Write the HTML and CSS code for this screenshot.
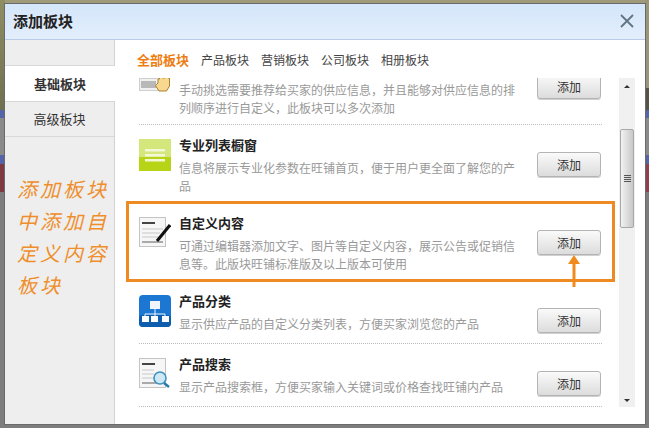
FILE: index.html
```html
<!DOCTYPE html>
<html lang="zh-CN">
<head>
  <meta charset="UTF-8">
  <title>添加板块</title>
  <link rel="stylesheet" href="styles.css">
</head>
<body>
  <div class="dialog">
    <header class="dialog-head">
      <h1>添加板块</h1>
      <svg class="close" width="14" height="14" viewBox="0 0 14 14"><path d="M1 1 13 13M13 1 1 13" stroke="#5f7484" stroke-width="1.8" fill="none"/></svg>
    </header>
    <div class="dialog-body">
      <aside class="side">
        <div class="side-tab active">基础板块</div>
        <div class="side-tab">高级板块</div>
        <p class="hand">添加板块<br>中添加自<br>定义内容<br>板块</p>
      </aside>
      <main class="main">
        <nav class="tabs">
          <span class="tab active">全部板块</span>
          <span class="tab">产品板块</span>
          <span class="tab">营销板块</span>
          <span class="tab">公司板块</span>
          <span class="tab">相册板块</span>
        </nav>
        <div class="panel">
          <div class="list">
            <div class="row tall first">
              <svg class="icon" width="32" height="32" viewBox="0 0 32 32">
                <rect x="0.500" y="17.500" width="20" height="12" fill="#f0f0f0" stroke="#cfcfcf"/>
                <rect x="2" y="20" width="15" height="7" fill="#b8b8b8"/>
                <path d="M16.500 24.500 19 22V18h1.500V16h3v1h2.500V16h3v1h1.500v8l-3 5H20z" fill="#f7d88e" stroke="#a9812f"/>
              </svg>
              <div class="info">
                <p>手动挑选需要推荐给买家的供应信息，并且能够对供应信息的排列顺序进行自定义，此板块可以多次添加</p>
              </div>
              <button class="add">添加</button>
            </div>
            <div class="row tall">
              <svg class="icon" width="32" height="32" viewBox="0 0 32 32">
                <rect width="32" height="32" fill="#d3e77c"/>
                <rect y="18" width="32" height="14" fill="#b7d417"/>
                <path d="M6 10h20v2.500H6zM6 15h20v2.500H6zM6 20h20v2.500H6z" fill="#f4f8d8"/>
              </svg>
              <div class="info">
                <h3>专业列表橱窗</h3>
                <p>信息将展示专业化参数在旺铺首页，便于用户更全面了解您的产品</p>
              </div>
              <button class="add">添加</button>
            </div>
            <div class="row tall">
              <svg class="icon" width="32" height="32" viewBox="0 0 32 32">
                <rect x="0.500" y="0.500" width="26" height="29" fill="#f6f6f6" stroke="#c4c4c4"/>
                <path d="M3 6h13" stroke="#444" stroke-width="2"/>
                <path d="M3 12h21M3 16h18M3 20h16" stroke="#c8c8c8"/>
                <path d="M3 25h21" stroke="#aaa" stroke-width="2"/>
                <path d="M18 24 31 8" stroke="#111" stroke-width="3"/>
              </svg>
              <div class="info">
                <h3>自定义内容</h3>
                <p>可通过编辑器添加文字、图片等自定义内容，展示公告或促销信息等。此版块旺铺标准版及以上版本可使用</p>
              </div>
              <button class="add">添加</button>
            </div>
            <div class="row">
              <svg class="icon" width="32" height="32" viewBox="0 0 32 32">
                <rect width="32" height="32" rx="4" fill="#1b77d2"/>
                <rect y="20" width="32" height="12" rx="4" fill="#0d5cae"/>
                <rect x="11" y="6" width="10" height="8" fill="#eef5fc"/>
                <path d="M16 14v5M6 22v-3h20v3M16 19v3" stroke="#eef5fc" fill="none"/>
                <rect x="3" y="21" width="7" height="6" fill="#fff"/>
                <rect x="12" y="21" width="7" height="6" fill="#fff"/>
                <rect x="23" y="21" width="7" height="6" fill="#fff"/>
              </svg>
              <div class="info">
                <h3>产品分类</h3>
                <p>显示供应产品的自定义分类列表，方便买家浏览您的产品</p>
              </div>
              <button class="add">添加</button>
            </div>
            <div class="row">
              <svg class="icon" width="32" height="32" viewBox="0 0 32 32">
                <rect x="0.500" y="0.500" width="26" height="29" fill="#f6f6f6" stroke="#c4c4c4"/>
                <path d="M3 6h13" stroke="#444" stroke-width="2"/>
                <path d="M3 12h12M3 16h12M3 20h12" stroke="#c8c8c8"/>
                <path d="M3 25h20" stroke="#aaa" stroke-width="2"/>
                <circle cx="21" cy="20" r="6" fill="#cfe8f6" stroke="#3f93bf" stroke-width="1.600"/>
                <path d="M25 25 30 29" stroke="#2a7aa6" stroke-width="2.500"/>
              </svg>
              <div class="info">
                <h3>产品搜索</h3>
                <p>显示产品搜索框，方便买家输入关键词或价格查找旺铺内产品</p>
              </div>
              <button class="add">添加</button>
            </div>
          </div>
          <div class="scrollbar">
            <span class="arrow up"></span>
            <div class="thumb"><span class="grip"></span></div>
            <span class="arrow down"></span>
          </div>
        </div>
      </main>
    </div>
  </div>
  <div class="mark"></div>
  <svg class="pointer" width="14" height="34" viewBox="0 0 14 34"><path d="M7 10V33" stroke="#f08a1d" stroke-width="3"/><path d="M7 1 13 10H1z" fill="#f08a1d"/></svg>
</body>
</html>
```

FILE: styles.css
```css
* {
  box-sizing: border-box;
}

html, body {
  height: 100%;
}

body {
  margin: 0;
  padding: 4px 4px 4px 5px;
  overflow: hidden;
  position: relative;
  font-family: "Liberation Sans", "Noto Sans CJK SC", sans-serif;
  background:
    linear-gradient(#8f8e62, #6f7050 110px, #5563a8 110px 118px, #8a8a8a 118px 155px, #5563a8 155px 164px, #7e3a40 164px 192px, #7d7d7d 192px) left top / 5px 100% no-repeat,
    linear-gradient(#9a9578 0 88px, #55524a 88px 110px, #5563a8 110px 118px, #8a8a8a 118px 155px, #5563a8 155px 164px, #8e4050 164px 192px, #7d7d7d 192px) right top / 4px 100% no-repeat,
    linear-gradient(#9e9a7a 0 30px, #7d7d7d 30px);
}

.dialog {
  height: 420px;
  display: flex;
  flex-direction: column;
  background: #fff;
  box-shadow: 0 0 0 1px #6a6a6a;
}

.dialog-head {
  height: 36px;
  flex: none;
  display: flex;
  justify-content: space-between;
  align-items: center;
  padding: 0 11px 2px 8px;
  background: linear-gradient(#d4e6fa, #e3eefb);
  border-bottom: 1px solid #b9cbe6;
}

.dialog-head h1 {
  margin: 0;
  font-size: 15px;
  font-weight: bold;
  color: #222;
}

.dialog-body {
  flex: 1;
  display: flex;
  min-height: 0;
}

.side {
  width: 110px;
  flex: none;
  padding-top: 25px;
  background: #eeeeee;
  border-right: 1px solid #d2d2d2;
}

.side-tab {
  height: 34px;
  line-height: 33px;
  text-align: center;
  font-size: 13px;
  color: #333;
  border-bottom: 1px solid #d8d8d8;
}

.side-tab.active {
  height: 37px;
  line-height: 37px;
  margin: 0 -1px 1px 0;
  position: relative;
  background: #fff;
  font-weight: bold;
  border-top: 1px solid #d8d8d8;
}

.hand {
  margin: 37px 0 0 12px;
  font-size: 20px;
  line-height: 32px;
  letter-spacing: 3px;
  white-space: nowrap;
  font-style: italic;
  color: #ee8f2c;
}

.main {
  flex: 1;
  min-width: 0;
  display: flex;
  flex-direction: column;
  padding-left: 22px;
}

.tabs {
  height: 38px;
  flex: none;
  display: flex;
  align-items: center;
  gap: 12px;
  font-size: 12px;
  color: #444;
}

.tab.active {
  font-size: 13px;
  font-weight: bold;
  color: #ee7d11;
}

.panel {
  flex: 1;
  min-height: 0;
  display: flex;
  margin: 0 0 17px 2px;
}

.list {
  width: 463px;
  overflow: hidden;
}

.row {
  height: 63px;
  display: flex;
  align-items: flex-start;
  padding-top: 14px;
  border-bottom: 1px dotted #bbbbbb;
}

.row.tall {
  height: 78px;
}

/* list is scrolled a little, the top of this row is hidden */
.row.first {
  margin-top: -31px;
}

.row:nth-child(2), .row:nth-child(3) {
  border-bottom: 0;
}

.icon {
  flex: none;
  margin-right: 8px;
}

.info {
  width: 342px;
  margin-top: -2px;
}

.first .info {
  padding-top: 18px;
}

.info h3 {
  margin: 0;
  font-size: 13px;
  line-height: 18px;
  font-weight: bold;
  color: #222;
}

.info p {
  margin: 5px 0 0;
  font-size: 12px;
  line-height: 18px;
  color: #999;
}

.add {
  width: 64px;
  height: 25px;
  flex: none;
  margin: 13px 0 0 16px;
  padding: 0;
  font: 12px "Liberation Sans", "Noto Sans CJK SC", sans-serif;
  color: #333;
  background: linear-gradient(#fafafa, #dcdcdc);
  border: 1px solid #b4b4b4;
  border-radius: 3px;
  box-shadow: 0 1px 0 #d0d0d0;
}

.scrollbar {
  width: 16px;
  margin-left: 17px;
  display: flex;
  flex-direction: column;
  align-items: center;
  background: #f0f0f0;
}

.arrow {
  width: 0;
  height: 0;
  flex: none;
  border-left: 3px solid transparent;
  border-right: 3px solid transparent;
}

.arrow.up {
  margin-top: 7px;
  border-bottom: 3px solid #333;
}

.arrow.down {
  margin-top: 171px;
  border-top: 3px solid #333;
}

.thumb {
  width: 14px;
  height: 99px;
  margin-top: 41px;
  display: flex;
  align-items: center;
  justify-content: center;
  background: linear-gradient(90deg, #f2f2f2, #c8c8c8);
  border: 1px solid #a8a8a8;
  border-radius: 2px;
}

.grip {
  width: 7px;
  height: 8px;
  background: repeating-linear-gradient(#555 0 1px, transparent 1px 2px);
}

/* annotation drawn over the list */
.mark {
  position: absolute;
  left: 126px;
  top: 201px;
  width: 489px;
  height: 81px;
  border: 3px solid #ee8a22;
}

.pointer {
  position: absolute;
  left: 567px;
  top: 254px;
}
```
